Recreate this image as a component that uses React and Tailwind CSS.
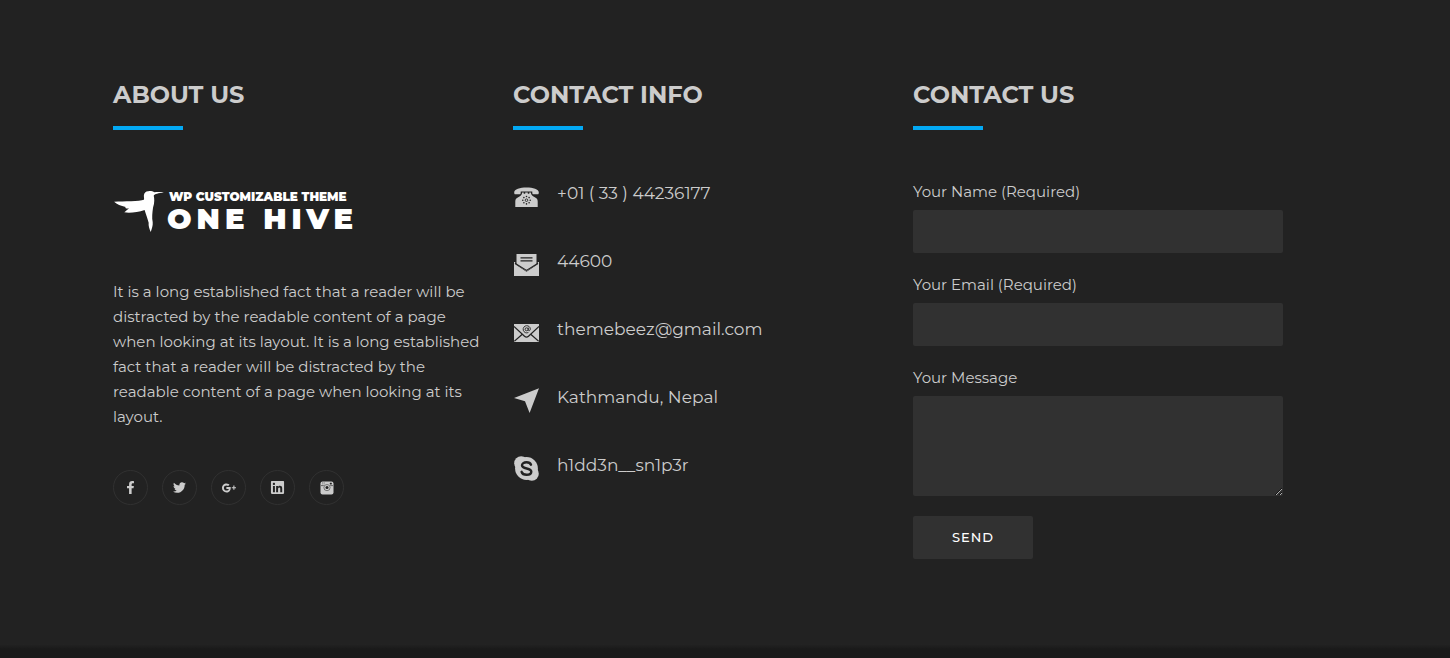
import React from 'react';
import { FaFacebookF, FaTwitter, FaLinkedin } from 'react-icons/fa';
import { IoLogoGoogleplus } from 'react-icons/io';

function InstagramIcon() {
  return (
    <svg viewBox="0 0 14 14" width="14" height="14" aria-hidden="true">
      <rect x=".5" y=".5" width="13" height="13" rx="2" fill="currentColor" />
      <path d="M1 4.600h2.800M10.200 4.600H13" stroke="#222" strokeWidth=".6" />
      <path d="M2.600 1v2.500M4.200 1v2.500" stroke="#222" strokeWidth=".3" />
      <rect x="9.800" y="1.700" width="2" height="1.800" rx=".4" fill="#222" />
      <circle cx="7" cy="6.600" r="3.100" fill="currentColor" stroke="#222" strokeWidth=".5" />
      <circle cx="7" cy="6.600" r="1.500" fill="#222" />
    </svg>
  );
}

function PhoneIcon() {
  return (
    <svg viewBox="0 0 25 25" width="25" height="25" fill="currentColor" aria-hidden="true">
      <path d="M12.500 3.500C6 3.500.2 5.200.2 8.200c0 1.400.3 2 1 2h4.300c.8 0 1.200-.5 1.200-1.300V7.500h11.600v1.400c0 .8.4 1.300 1.200 1.300h4.300c.7 0 1-.6 1-2 0-3-5.800-4.700-12.300-4.700Z" />
      <path d="M8.200 8.500h1.500v1.300h1.500V8.500h2.600v1.300h1.500V8.500h1.500c.3 2.500 1.900 3.900 4.400 5 1.800.8 2.500 2 2.500 4V23H1.300v-5.500c0-2 .7-3.200 2.500-4 2.500-1.100 4.100-2.500 4.400-5Z" />
      <g stroke="#222" strokeWidth="1.600" strokeLinecap="round">
        <path d="M12.500 12.500h0M12.500 19.900h0M8.800 16.200h0M16.200 16.200h0M9.900 13.600h0M15.100 13.600h0M9.900 18.800h0M15.100 18.800h0" />
      </g>
      <circle cx="12.500" cy="16.200" r="1.300" fill="none" stroke="#222" strokeWidth=".9" />
    </svg>
  );
}

function LetterIcon() {
  return (
    <svg viewBox="0 0 25 25" width="25" height="25" fill="currentColor" aria-hidden="true">
      <path
        fillRule="evenodd"
        d="M2.500 2h20v10.600L12.500 19.200 2.500 12.600ZM6.500 5.200v1.300h12V5.200ZM6.500 8.200v1.300h12V8.200Z"
      />
      <path d="M0 10h1.200v2.200L12.500 19.800l11.300-7.600V10H25V24H0Z" />
      <path d="m1 11.200 11.500 7.200L24 11.200" fill="none" stroke="#222" strokeWidth="1.200" />
    </svg>
  );
}

function EmailIcon() {
  return (
    <svg viewBox="0 0 25 25" width="25" height="25" aria-hidden="true">
      <path fill="currentColor" d="M0 4h25v18H0Z" />
      <g fill="none" stroke="#222" strokeWidth="1.200">
        <path d="m0 6.500 10.500 9.800c1.300 1.200 2.700 1.200 4 0L25 6.500" />
        <path d="m.3 21.200 8-7M24.700 21.200l-8-7" />
      </g>
      <g fill="none" stroke="#222" strokeWidth=".9">
        <circle cx="12.600" cy="9.300" r="1.500" />
        <path d="M14.300 7.600v2.200c0 1.500 2 1.200 2-.8 0-2-1.700-3.300-3.700-3.300a3.600 3.600 0 1 0 1.800 6.800" />
      </g>
    </svg>
  );
}

function PlaneIcon() {
  return (
    <svg viewBox="0 0 25 25" width="25" height="25" fill="currentColor" aria-hidden="true">
      <path d="M25 .3 0 10 11 13.200 15.600 25Z" />
    </svg>
  );
}

function SkypeIcon() {
  return (
    <svg viewBox="0 0 25 25" width="25" height="25" aria-hidden="true">
      <g fill="currentColor">
        <circle cx="12.500" cy="12.500" r="11.400" />
        <circle cx="7.200" cy="7.200" r="7" />
        <circle cx="17.800" cy="17.800" r="7" />
      </g>
      <path
        d="M17 8.700C16.300 6.900 14.700 6.300 12.500 6.300c-2.700 0-4.500 1.200-4.500 3 0 2.100 2 2.600 4.700 3.200 2.800.6 4.600 1.200 4.600 3.300 0 1.900-1.900 3-4.700 3-2.700 0-4.400-1-5-3"
        fill="none"
        stroke="#222"
        strokeWidth="2.400"
        strokeLinecap="round"
      />
    </svg>
  );
}

function BirdLogo() {
  return (
    <svg viewBox="27 33 153 127" width="52" height="43" className="shrink-0 fill-white" aria-hidden="true">
      <path d="M177 41C168 38 158 39 149 40C142 35 124 34 119 44C116 52 120 57 118 62C105 67 60 66 30 68C38 76 50 80 64 83C61 87 66 88 74 88C68 92 64 96 60 99C75 102 100 99 120 92C124 105 129 118 132 130C131 138 134 148 138 157C141 148 145 138 144 128C141 115 143 100 145 85C150 70 149 58 147 50C150 44 160 42 177 41Z" />
    </svg>
  );
}

const socials = [
  { name: 'Facebook', icon: <FaFacebookF size={13} /> },
  { name: 'Twitter', icon: <FaTwitter size={13} /> },
  { name: 'Google Plus', icon: <IoLogoGoogleplus size={14} /> },
  { name: 'LinkedIn', icon: <FaLinkedin size={15} /> },
  { name: 'Instagram', icon: <InstagramIcon /> },
];

const contacts = [
  { text: '+01 ( 33 ) 44236177', icon: <PhoneIcon /> },
  { text: '44600', icon: <LetterIcon /> },
  { text: 'themebeez@gmail.com', icon: <EmailIcon /> },
  { text: 'Kathmandu, Nepal', icon: <PlaneIcon /> },
  { text: 'h1dd3n__sn1p3r', icon: <SkypeIcon /> },
];

function WidgetTitle({ children }) {
  return (
    <div className="mb-[49px]">
      <h2 className="text-2xl font-bold uppercase">{children}</h2>
      <div className="mt-[15px] h-1 w-[70px] bg-[#03a9f4]" />
    </div>
  );
}

function Field({ id, label, children }) {
  return (
    <div className="mb-[19px]">
      <label htmlFor={id} className="mb-1.5 block text-[15px] leading-[25px]">
        {label}
      </label>
      {children}
    </div>
  );
}

function App() {
  return (
    <footer className="bg-[#222] font-['Montserrat','Inter',sans-serif] text-[#ccc]">
      <div className="grid max-w-[1283px] grid-cols-3 gap-[30px] pt-[79px] pb-[84px] pl-[113px]">
        <section>
          <WidgetTitle>About Us</WidgetTitle>
          <a href="#home" className="flex items-start pt-[11px] text-white">
            <BirdLogo />
            <span className="ml-0.5 block whitespace-nowrap">
              <span className="ml-0.5 block text-xs leading-[14px] font-black">WP CUSTOMIZABLE THEME</span>
              <span className="block text-[29px] leading-[30px] font-black tracking-[5px]">ONE HIVE</span>
            </span>
          </a>
          <p className="mt-[45px] text-[15px] leading-[25px]">
            It is a long established fact that a reader will be distracted by the readable content of a page when
            looking at its layout. It is a long established fact that a reader will be distracted by the readable
            content of a page when looking at its layout.
          </p>
          <ul className="mt-[41px] flex gap-3.5">
            {socials.map((s) => (
              <li key={s.name}>
                <a
                  href="#social"
                  aria-label={s.name}
                  className="flex h-[35px] w-[35px] items-center justify-center rounded-full border border-[#313131]"
                >
                  {s.icon}
                </a>
              </li>
            ))}
          </ul>
        </section>

        <section>
          <WidgetTitle>Contact Info</WidgetTitle>
          <ul className="flex flex-col gap-[38px]">
            {contacts.map((c) => (
              <li key={c.text} className="flex h-[30px] gap-[18px] text-[17px] leading-7">
                <span className="flex w-[26px] shrink-0 items-end justify-end">{c.icon}</span>
                <span>{c.text}</span>
              </li>
            ))}
          </ul>
        </section>

        <section>
          <WidgetTitle>Contact Us</WidgetTitle>
          <form>
            <Field id="name" label="Your Name (Required)">
              <input id="name" type="text" className="block h-[43px] w-full rounded-xs bg-[#313131] px-4" />
            </Field>
            <Field id="email" label="Your Email (Required)">
              <input id="email" type="email" className="block h-[43px] w-full rounded-xs bg-[#313131] px-4" />
            </Field>
            <Field id="message" label="Your Message">
              <textarea id="message" className="block h-[100px] w-full resize rounded-xs bg-[#313131] p-4" />
            </Field>
            <button
              type="button"
              className="mt-5 block h-[43px] w-[120px] rounded-xs bg-[#313131] text-[13px] font-medium tracking-[1px] text-white uppercase"
            >
              Send
            </button>
          </form>
        </section>
      </div>
      <div className="h-[15px] bg-linear-to-b from-[#222] from-10% to-[#1a1a1a] to-40%" />
    </footer>
  );
}

export default App;
